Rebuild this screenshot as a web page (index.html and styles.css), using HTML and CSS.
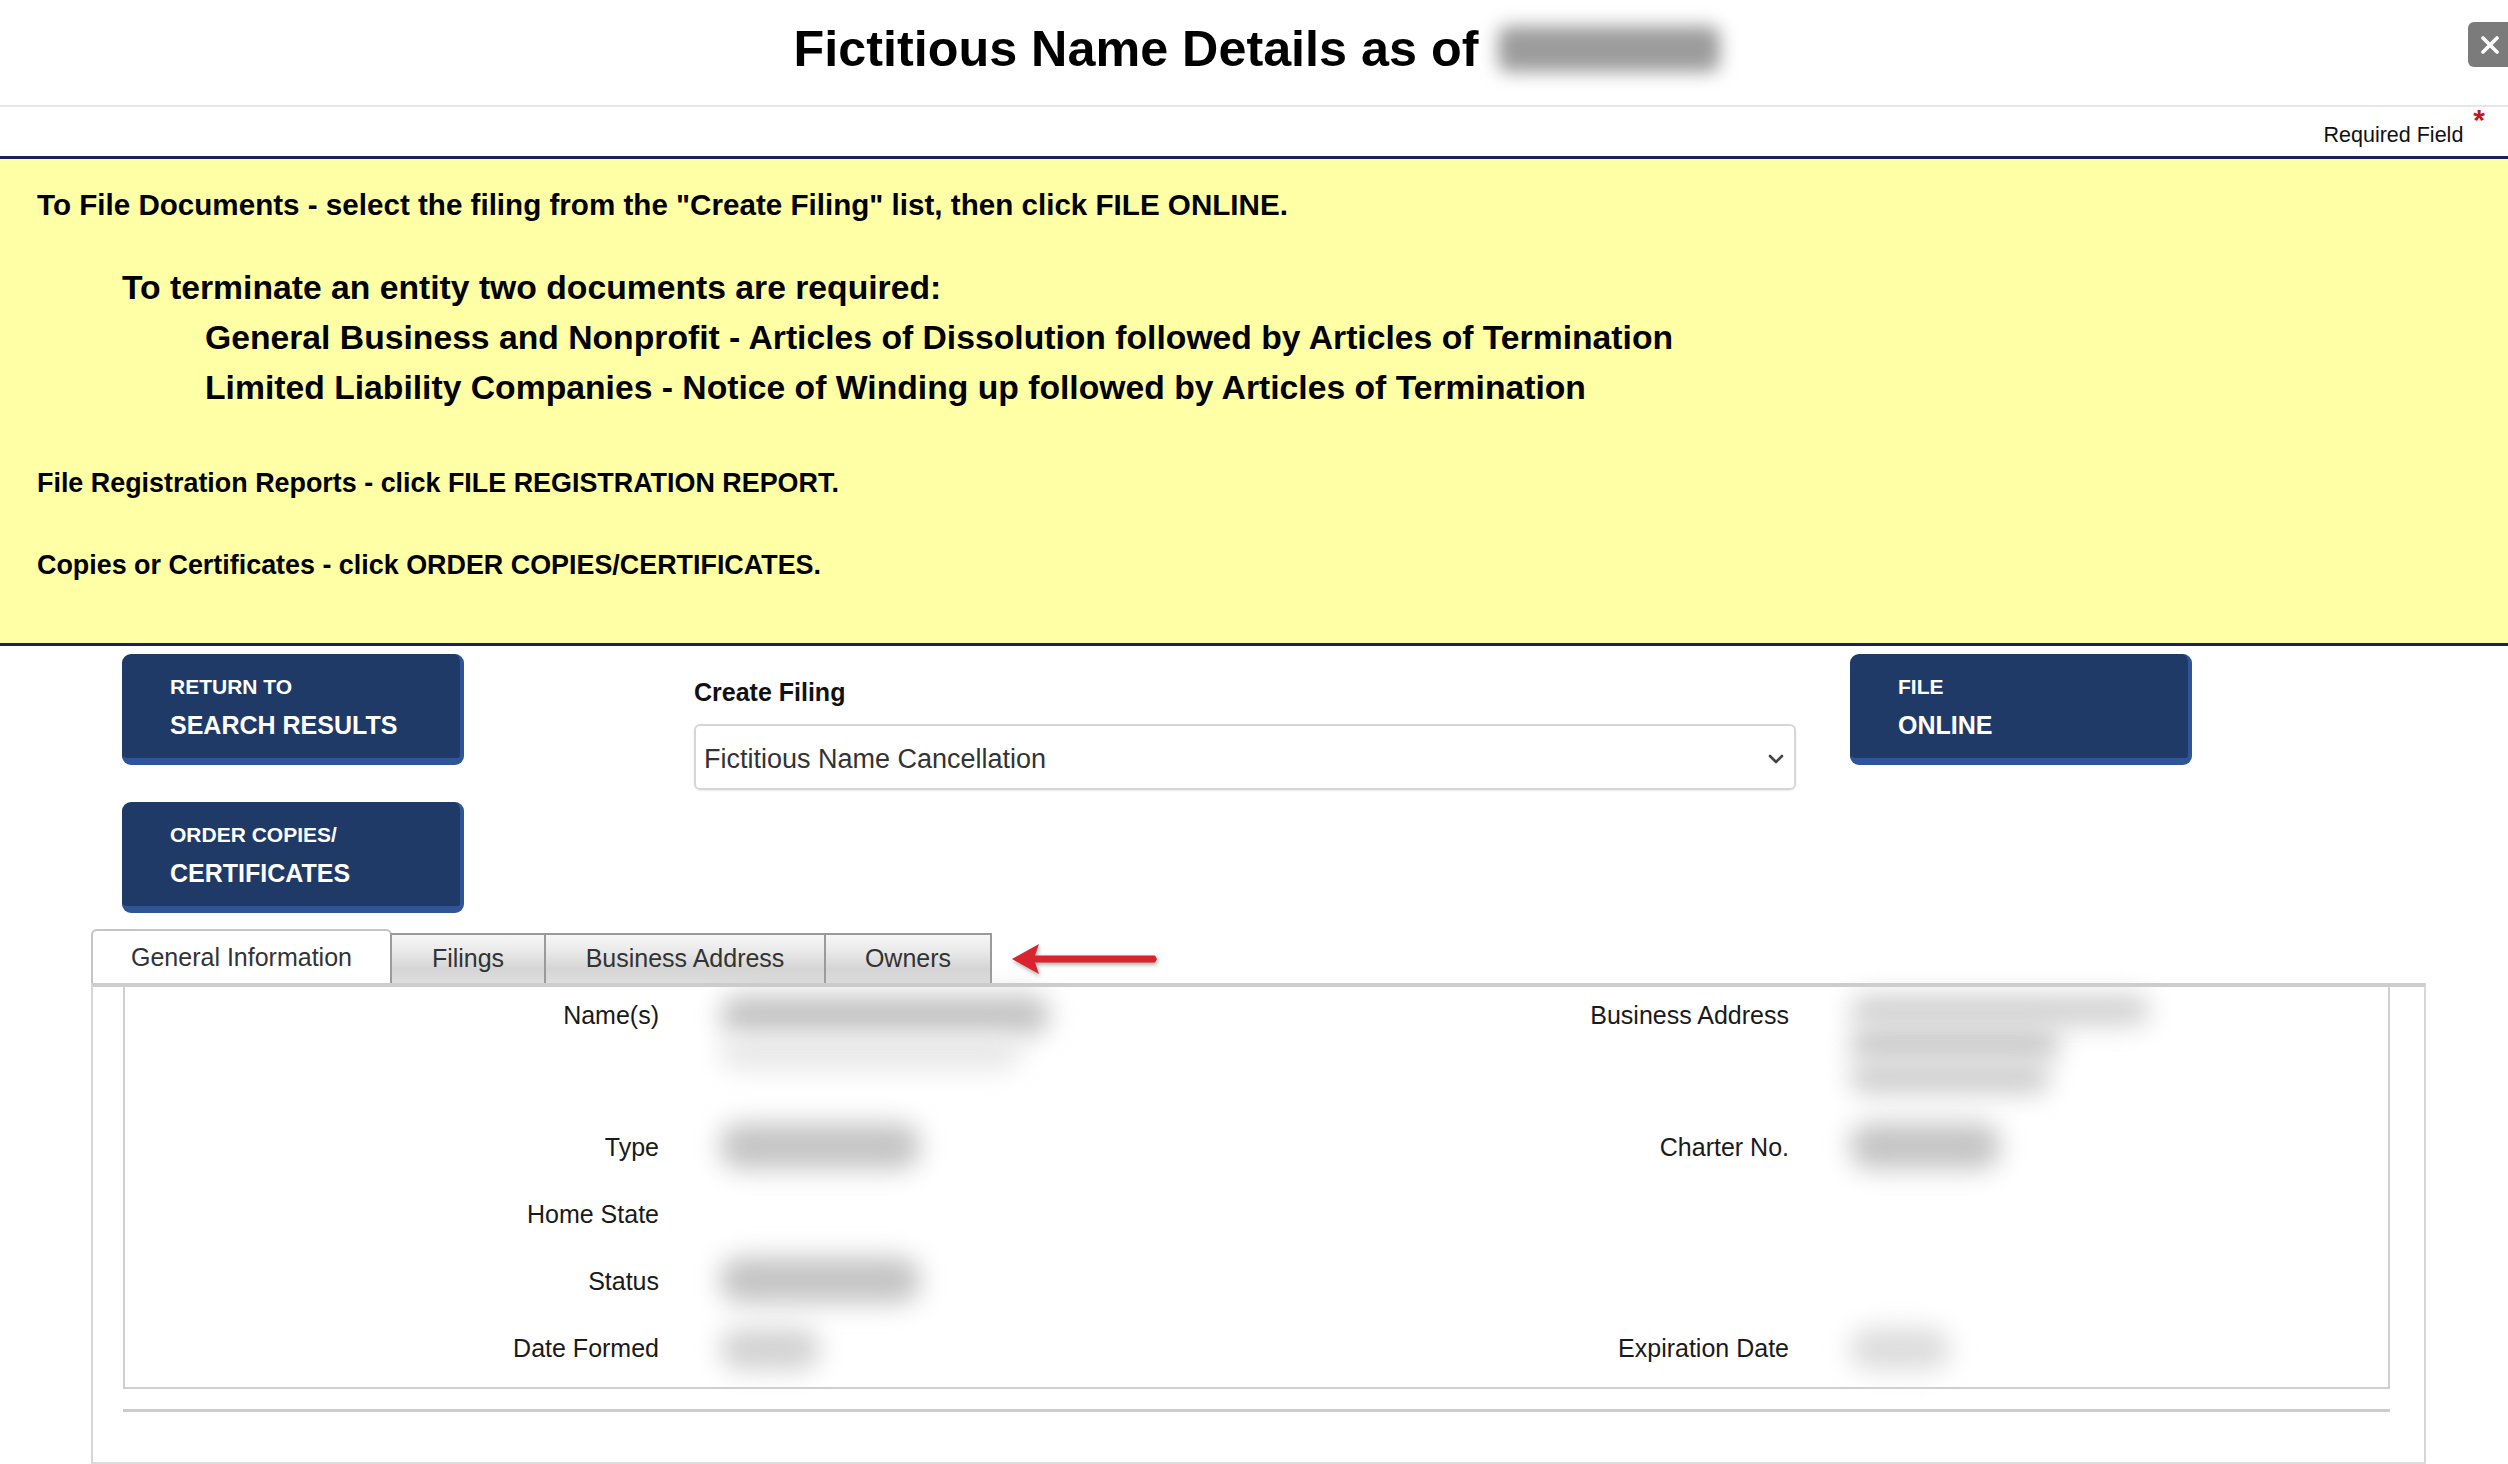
FILE: index.html
```html
<!DOCTYPE html>
<html lang="en">
<head>
    <meta charset="UTF-8" />
    <meta name="viewport" content="width=device-width, initial-scale=1.0" />
    <title>Fictitious Name Details</title>
    <link rel="stylesheet" href="styles.css">
</head>
<body>

<div class="modal-head">
    <h1>Fictitious Name Details as of <span class="blur-date"></span></h1>
    <button class="close-btn" type="button" aria-label="Close">
        <svg width="18" height="18" viewBox="0 0 18 18"><path d="M2 2 L16 16 M16 2 L2 16" stroke="#fff" stroke-width="3.6" stroke-linecap="round"/></svg>
    </button>
</div>

<div class="req-bar">Required Field <span class="req-star">*</span></div>

<div class="notice">
    <p class="notice-main">To File Documents - select the filing from the "Create Filing" list, then click FILE ONLINE.</p>
    <p class="notice-head">To terminate an entity two documents are required:</p>
    <p class="notice-item">General Business and Nonprofit - Articles of Dissolution followed by Articles of Termination</p>
    <p class="notice-item">Limited Liability Companies - Notice of Winding up followed by Articles of Termination</p>
    <p class="notice-sub first">File Registration Reports - click FILE REGISTRATION REPORT.</p>
    <p class="notice-sub">Copies or Certificates - click ORDER COPIES/CERTIFICATES.</p>
</div>

<div class="actions">
    <div class="action-left">
        <a href="#" class="nav-btn"><span class="small">RETURN TO</span><span class="big">SEARCH RESULTS</span></a>
        <a href="#" class="nav-btn"><span class="small">ORDER COPIES/</span><span class="big">CERTIFICATES</span></a>
    </div>
    <div class="create-filing">
        <label for="filingType">Create Filing</label>
        <div class="select-box" id="filingType">
            <span>Fictitious Name Cancellation</span>
            <svg width="16" height="10" viewBox="0 0 16 10"><polyline points="2,2 8,8 14,2" fill="none" stroke="#444" stroke-width="2.6" stroke-linecap="round" stroke-linejoin="round"/></svg>
        </div>
    </div>
    <a href="#" class="nav-btn file-btn"><span class="small">FILE</span><span class="big">ONLINE</span></a>
</div>

<div class="tabs">
    <div class="tab active">General Information</div>
    <div class="tab tab-filings">Filings</div>
    <div class="tab tab-address">Business Address</div>
    <div class="tab tab-owners">Owners</div>
    <svg class="pointer" width="150" height="40" viewBox="0 0 150 40">
        <polygon points="2,20 29,5 25,16.5 145,16.5 147,20 145,23.5 25,23.5 29,35" fill="#d9232e"/>
    </svg>
</div>

<div class="tab-panel">
    <div class="details">
        <table>
            <colgroup>
                <col class="c-label1">
                <col class="c-value1">
                <col class="c-label2">
                <col>
            </colgroup>
            <tr class="tall">
                <td class="label">Name(s)</td>
                <td class="value">
                    <div class="blob b-name"></div>
                    <div class="blob b-name2"></div>
                </td>
                <td class="label">Business Address</td>
                <td class="value">
                    <div class="blob b-addr1"></div>
                    <div class="blob b-addr2"></div>
                    <div class="blob b-addr3"></div>
                </td>
            </tr>
            <tr>
                <td class="label">Type</td>
                <td class="value"><div class="blob b-short"></div></td>
                <td class="label">Charter No.</td>
                <td class="value"><div class="blob b-charter"></div></td>
            </tr>
            <tr>
                <td class="label">Home State</td>
                <td class="value"></td>
                <td class="label"></td>
                <td class="value"></td>
            </tr>
            <tr>
                <td class="label">Status</td>
                <td class="value"><div class="blob b-short"></div></td>
                <td class="label"></td>
                <td class="value"></td>
            </tr>
            <tr>
                <td class="label">Date Formed</td>
                <td class="value"><div class="blob b-date"></div></td>
                <td class="label">Expiration Date</td>
                <td class="value"><div class="blob b-date light"></div></td>
            </tr>
        </table>
    </div>
    <div class="panel-rule"></div>
</div>

</body>
</html>
```

FILE: styles.css
```css
body {
    margin: 0;
    font-family: "Liberation Sans", Arial, Helvetica, sans-serif;
    color: #000;
    background: #fff;
    overflow: hidden;
}

/* header */
.modal-head {
    position: relative;
    height: 105px;
    border-bottom: 2px solid #e6e6e6;
    text-align: center;
}

.modal-head h1 {
    margin: 0;
    padding-top: 19px;
    padding-left: 6px;
    font-size: 50.3px;
    line-height: 60px;
    font-weight: bold;
}

.blur-date {
    display: inline-block;
    width: 222px;
    height: 46px;
    margin-left: 6px;
    vertical-align: -6px;
    background: #9c9c9c;
    border-radius: 10px;
    filter: blur(9px);
}

.close-btn {
    position: absolute;
    top: 22px;
    left: 2468px;
    width: 48px;
    height: 45px;
    padding: 0 0 0 4px;
    border: none;
    border-radius: 6px;
    background: #7b7b7b;
    display: flex;
    align-items: center;
    justify-content: flex-start;
}

.close-btn svg {
    margin-left: 9px;
}

.req-bar {
    height: 49px;
    box-sizing: border-box;
    padding: 13px 23px 0 0;
    text-align: right;
    font-size: 21.5px;
    line-height: 30px;
    color: #111;
}

.req-star {
    margin-left: 4px;
    color: #c4161c;
    font-weight: bold;
    font-size: 30px;
    line-height: 0;
    vertical-align: 12px;
}

/* yellow instructions */
.notice {
    background: #ffffa6;
    border-top: 3px solid #1c1f5e;
    border-bottom: 3px solid #1c1f5e;
    padding: 26px 0 58px 37px;
    font-weight: bold;
}

.notice p {
    margin: 0;
}

.notice-main {
    font-size: 29.6px;
    line-height: 40px;
}

.notice-head {
    margin-top: 37px !important;
    padding-left: 85px;
    font-size: 33.7px;
    line-height: 50px;
}

.notice-item {
    padding-left: 168px;
    font-size: 33.7px;
    line-height: 50px;
}

.notice-sub {
    margin-top: 42px !important;
    font-size: 26.9px;
    line-height: 40px;
}

.notice-sub.first {
    margin-top: 51px !important;
}

/* buttons + create filing */
.actions {
    display: flex;
    align-items: flex-start;
    padding: 8px 0 0 122px;
}

.action-left {
    display: flex;
    flex-direction: column;
    gap: 37px;
    width: 342px;
}

.nav-btn {
    display: block;
    width: 342px;
    box-sizing: border-box;
    padding: 18px 0 10px 48px;
    background: #1f3a67;
    border-right: 4px solid #2f5596;
    border-bottom: 7px solid #2f5596;
    border-radius: 9px;
    color: #fff;
    text-decoration: none;
    font-weight: bold;
}

.nav-btn .small {
    display: block;
    font-size: 21px;
    line-height: 30px;
}

.nav-btn .big {
    display: block;
    font-size: 25px;
    line-height: 46px;
}

.create-filing {
    width: 1102px;
    margin-left: 230px;
    padding-top: 20px;
}

.create-filing label {
    display: block;
    font-size: 25px;
    line-height: 36px;
    font-weight: bold;
    color: #111;
}

.select-box {
    margin-top: 14px;
    height: 66px;
    box-sizing: border-box;
    border: 2px solid #d6d6d6;
    border-radius: 6px;
    box-shadow: 0 1px 2px rgba(0, 0, 0, 0.08);
    display: flex;
    align-items: center;
    justify-content: space-between;
    padding: 4px 10px 0 8px;
    font-size: 27px;
    color: #333;
}

.file-btn {
    margin-left: 54px;
}

/* tabs */
.tabs {
    display: flex;
    align-items: flex-end;
    height: 54px;
    margin-top: 16px;
    padding-left: 91px;
}

.tab {
    box-sizing: border-box;
    height: 50px;
    border: 2px solid #9a9a9a;
    border-bottom: none;
    margin-left: -2px;
    background: linear-gradient(to bottom, #f6f6f6 0%, #e9e9e9 35%, #d5d5d5 70%, #dedede 100%);
    font-size: 25px;
    line-height: 46px;
    color: #333;
    text-align: center;
}

.tab.active {
    height: 54px;
    width: 301px;
    margin-left: 0;
    border-color: #c4c4c4;
    border-radius: 6px 6px 0 0;
    background: #fff;
    line-height: 52px;
}

.tab-filings { width: 156px; }
.tab-address { width: 282px; }
.tab-owners { width: 168px; }

.pointer {
    align-self: center;
    margin: 6px 0 0 18px;
    filter: drop-shadow(1px 2px 2px rgba(0, 0, 0, 0.35));
}

.tab-panel {
    margin: 0 82px 0 91px;
    border-top: 4px solid #cdcdcd;
    border-left: 2px solid #d6d6d6;
    border-right: 2px solid #d6d6d6;
    border-bottom: 2px solid #dcdcdc;
    padding: 0 34px 50px 30px;
}

.details {
    border: 2px solid #cfcfcf;
    border-top: none;
}

.details table {
    width: 100%;
    border-collapse: collapse;
    table-layout: fixed;
}

.c-label1 { width: 565px; }
.c-value1 { width: 870px; }
.c-label2 { width: 260px; }

.details tr {
    height: 67px;
}

.details tr.tall {
    height: 132px;
}

.details td {
    vertical-align: top;
    padding: 13px 30px 0;
    font-size: 25px;
    line-height: 30px;
    color: #1a1a1a;
}

.details td.label {
    text-align: right;
    padding-right: 31px;
}

.details td.value {
    padding-top: 8px;
}

.blob {
    height: 40px;
    background: #c4c4c4;
    border-radius: 20px;
    filter: blur(13px);
}

.b-name { width: 330px; }
.b-name2 { width: 300px; height: 30px; margin-top: 4px; background: #e6e6e6; }
.b-addr1 { width: 300px; height: 30px; background: #d0d0d0; }
.b-addr2 { width: 210px; height: 30px; margin-top: 4px; background: #c6c6c6; }
.b-addr3 { width: 200px; height: 30px; margin-top: 4px; background: #cbcbcb; }
.b-short { width: 200px; height: 46px; margin-top: -4px; }
.b-charter { width: 150px; height: 46px; margin-top: -4px; }
.b-date { width: 100px; height: 42px; background: #d2d2d2; }
.b-date.light { background: #dcdcdc; }

.panel-rule {
    height: 3px;
    margin-top: 20px;
    background: #cccccc;
}
```
